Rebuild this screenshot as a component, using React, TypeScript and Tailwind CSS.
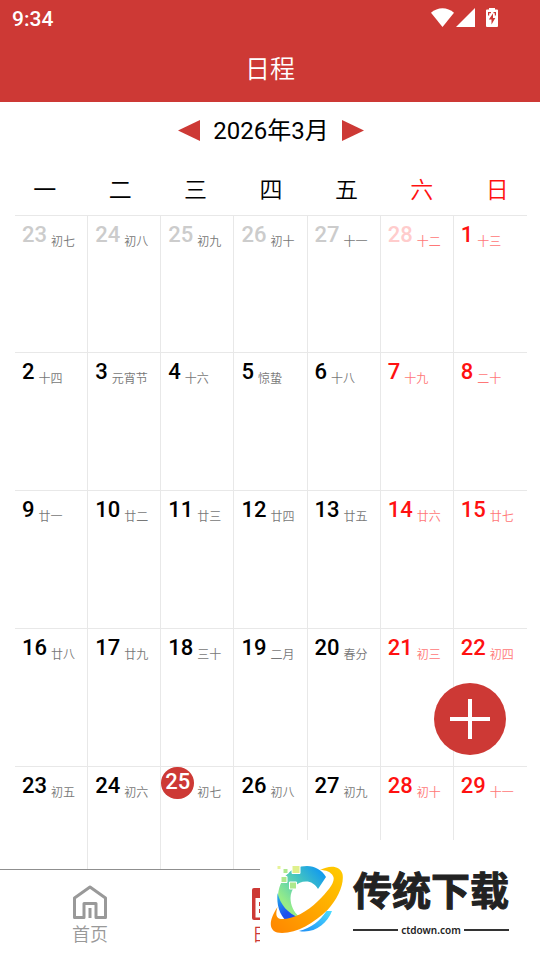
import clsx from "clsx";

interface Day {
  day: number;
  lunar: string;
  outside?: boolean; // belongs to the previous month
  today?: boolean;
}

const WEEKDAYS = ["一", "二", "三", "四", "五", "六", "日"];

const LUNAR = [
  ["初七", "初八", "初九", "初十", "十一", "十二", "十三"],
  ["十四", "元宵节", "十六", "惊蛰", "十八", "十九", "二十"],
  ["廿一", "廿二", "廿三", "廿四", "廿五", "廿六", "廿七"],
  ["廿八", "廿九", "三十", "二月", "春分", "初三", "初四"],
  ["初五", "初六", "初七", "初八", "初九", "初十", "十一"],
];

// The first row starts on Feb 23, so March 1 is its last cell.
const WEEKS: Day[][] = LUNAR.map((row, w) =>
  row.map((lunar, d) => {
    const n = w * 7 + d - 5;
    return { day: n < 1 ? n + 28 : n, lunar, outside: n < 1, today: n === 25 };
  })
);

function StatusBar() {
  return (
    <div className="flex h-9 items-center justify-between pr-10 pl-3">
      <span className="pt-[2px] text-[21px] leading-6 font-medium">9:34</span>
      <div className="flex items-center gap-[2px]">
        <svg width="23" height="20" viewBox="0 0 23 20" fill="currentColor">
          <path d="M0 4.800C6.500-1.300 16.500-1.300 23 4.800L11.500 19z" />
        </svg>
        <svg width="19" height="20" viewBox="0 0 19 20" fill="currentColor">
          <path d="M19 0V19H0z" />
        </svg>
        <svg className="ml-[7px]" width="16" height="20" viewBox="0 0 16 20" fill="currentColor">
          <path
            fillRule="evenodd"
            d="M5 0h6v1.500h2q1 0 1 1V18q0 1-1 1H3q-1 0-1-1V2.500q0-1 1-1h2zM9 5.500L4.800 11.500h2.700V16.500L11.300 10H9zM4 4v3.500h1.200V5.200H7V4zM9.500 4v1.200h1.300V7.500H12V4z"
          />
        </svg>
      </div>
    </div>
  );
}

function DayCell({ day, lunar, outside, today, weekend }: Day & { weekend: boolean }) {
  return (
    <div className="border-t border-r border-[#e8e8e8] nth-[7n]:border-r-0">
      <div className={clsx("flex h-8 items-end", today ? "gap-[3px]" : "gap-1 pl-[7px]")}>
        <span
          className={clsx(
            "text-[22px] font-medium",
            today
              ? "h-8 w-[33px] shrink-0 rounded-full bg-[#cd3935] text-center leading-[29px] text-white"
              : "leading-[26px]",
            !today && !outside && (weekend ? "text-[#ff1111]" : "text-black"),
            outside && (weekend ? "text-[#ffcccc]" : "text-[#cccccc]")
          )}
        >
          {day}
        </span>
        <span
          className={clsx(
            "text-xs leading-3 font-[350] whitespace-nowrap",
            weekend ? "text-[#ff7777]" : "text-[#777777]"
          )}
        >
          {lunar}
        </span>
      </div>
    </div>
  );
}

function HomeIcon() {
  return (
    <svg width="36" height="36" viewBox="0 0 36 36" fill="none" stroke="currentColor" strokeWidth="3">
      <path d="M2.500 33.500V14L18 3l15.500 11v19.500H24V19.500H12v14z" strokeLinejoin="round" />
      <path d="M18 24v10" />
    </svg>
  );
}

function ScheduleIcon() {
  return (
    <svg width="36" height="36" viewBox="0 0 36 36">
      <rect y="4" width="36" height="32" rx="2" fill="currentColor" />
      <rect x="3.500" y="14" width="29" height="19.500" fill="#fff" />
      <path d="M7 18h5v4H7zM7 25h5v4H7zM16 18h5v4h-5zM16 25h5v4h-5z" fill="currentColor" />
    </svg>
  );
}

function SiteBadge() {
  return (
    <aside className="absolute right-0 bottom-0 flex h-[120px] w-[280px] bg-white pt-[22px] pl-[9px]">
      <svg className="shrink-0" width="76" height="76" viewBox="0 0 76 76">
        <defs>
          <linearGradient id="arc" x1="0" y1="1" x2="1" y2="0">
            <stop offset="0.25" stopColor="#96ec88" />
            <stop offset="0.6" stopColor="#45c5c0" />
            <stop offset="0.95" stopColor="#0b94f5" />
          </linearGradient>
          <linearGradient id="blue" x1="0" y1="0" x2="0.6" y2="1">
            <stop offset="0" stopColor="#25b5e8" />
            <stop offset="0.7" stopColor="#1d50f0" />
          </linearGradient>
          <linearGradient id="ring" x1="0" y1="1" x2="1" y2="0">
            <stop offset="0" stopColor="#ff8500" />
            <stop offset="1" stopColor="#ffcc00" />
          </linearGradient>
          <linearGradient id="tail" x1="0" y1="1" x2="1" y2="0">
            <stop offset="0" stopColor="#1f8ff5" />
            <stop offset="1" stopColor="#4bdcff" />
          </linearGradient>
        </defs>
        <path d="M9 36C9 17 22 4 38 4c8 0 15 4 19 11l-8 12c-3-5-7-7.500-12-7.500C28 19.500 21.500 27 21.500 36c0 7 3 14 9 19l-7 5C13 54 9 46 9 36z" fill="url(#arc)" />
        <path d="M8.500 31c3 12 10 20 22 25l-12 4C10 53 7.500 42 8.500 31z" fill="url(#blue)" />
        <path d="M57.500 49h5.500c-5 13-18 23-33 20 12-3 21-10 27.500-20z" fill="url(#tail)" />
        <path d="M51 8c9-5 20-5 22.500 4 2 10-5 25-15 36C45 61 28 71 13 71 0 71-2 61 8.500 45c-2 7-2 12 5 12C24 57 38 50 49 39 60 28 67 19 64 14c-2-4-7-6-13-6z" fill="url(#ring)" />
        <g stroke="#fff">
          <path d="M23 3.500h8v8h-8z" fill="#dff08c" />
          <path d="M14 6.500h5v5h-5zM12 14.500h6v6h-6zM20.500 20h7v7h-7z" fill="#aee88d" />
          <path d="M8 3.500h4v4H8z" fill="#e7f39a" />
        </g>
      </svg>
      <div className="ml-2 w-[156px] text-[#222222]">
        <div className="pt-1 text-[39px] leading-[52px] font-bold whitespace-nowrap [-webkit-text-stroke:1px_#222222]">传统下载</div>
        <div className="flex items-center gap-[3px]">
          <span className="h-[2px] flex-1 bg-[#333333]" />
          <span className="font-['Noto_Sans'] text-[10px] leading-6 font-semibold">ctdown.com</span>
          <span className="h-[2px] flex-1 bg-[#333333]" />
        </div>
      </div>
    </aside>
  );
}

export default function App() {
  return (
    <div className="relative flex h-dvh flex-col overflow-hidden bg-white font-[Roboto,'Noto_Sans_CJK_SC',sans-serif] text-black">
      <header className="bg-[#cd3935] text-white">
        <StatusBar />
        <h1 className="pt-4 pb-[14px] text-center text-[25px] leading-9 font-[350]">日程</h1>
      </header>

      <main className="relative min-h-0 flex-1">
        <div className="h-full overflow-hidden">
          <div className="flex h-14 items-center justify-center gap-[13px] pt-[2px] pl-[2px] text-2xl">
            <button aria-label="上个月" className="text-[#cd3935]">
              <svg width="22" height="22" viewBox="0 0 22 22" fill="currentColor">
                <path d="M22 0v21L0 10.500z" />
              </svg>
            </button>
            <h2>2026年3月</h2>
            <button aria-label="下个月" className="text-[#cd3935]">
              <svg width="22" height="22" viewBox="0 0 22 22" fill="currentColor">
                <path d="M0 0v21L22 10.500z" />
              </svg>
            </button>
          </div>

          <div className="grid grid-cols-7 pt-[15px] pr-[5px] pb-[6px] pl-[7px] text-center text-[23px] leading-9 font-[350]">
            {WEEKDAYS.map((name, i) => (
              <div key={name} className={clsx(i > 4 && "text-[#ff1111]")}>
                {name}
              </div>
            ))}
          </div>

          <div className="mr-[13px] ml-[15px] grid grid-cols-7 grid-rows-[137px_repeat(4,138px)]">
            {WEEKS.flat().map((d, i) => (
              <DayCell key={i} {...d} weekend={i % 7 > 4} />
            ))}
          </div>
        </div>

        <button
          aria-label="添加日程"
          className="absolute right-[34px] bottom-[114px] flex size-[72px] items-center justify-center rounded-full bg-[#cd3935] text-white"
        >
          <svg width="40" height="40" viewBox="0 0 40 40" stroke="currentColor" strokeWidth="4">
            <path d="M20 0v40M0 20h40" />
          </svg>
        </button>
      </main>

      <nav className="grid h-[91px] shrink-0 grid-cols-3 border-t border-[#8f8f8f] text-lg leading-6 font-[350]">
        <a href="#home" className="flex flex-col items-center gap-[3px] pt-[14px] text-[#999999]">
          <HomeIcon />
          <span>首页</span>
        </a>
        <a href="#schedule" className="flex flex-col items-center gap-[3px] pt-[14px] text-[#cd3935]">
          <ScheduleIcon />
          <span>日程</span>
        </a>
      </nav>

      <SiteBadge />
    </div>
  );
}
